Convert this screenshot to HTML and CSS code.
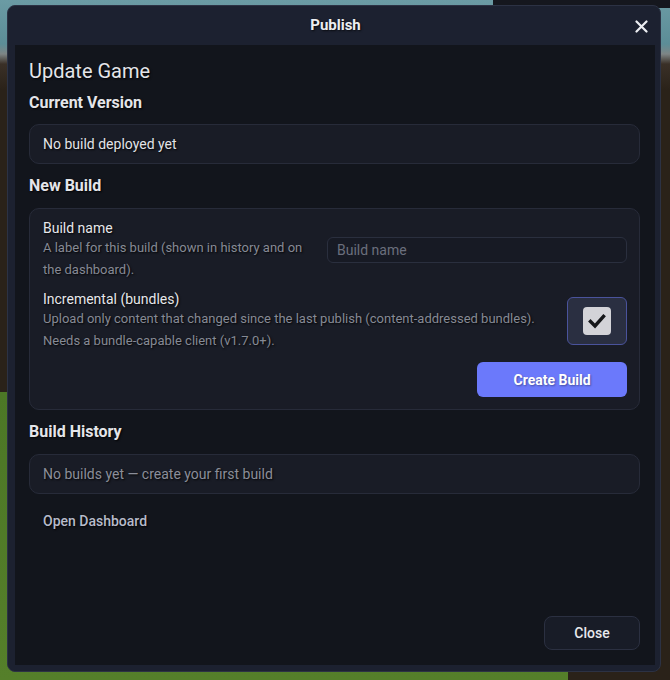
FILE: index.html
```html
<!DOCTYPE html>
<html lang="en">
<head>
<meta charset="utf-8">
<title>Publish</title>
<link rel="stylesheet" href="styles.css">
</head>
<body>
<div class="dialog">
  <div class="dialog-header">
    <span class="dialog-title">Publish</span>
    <button class="icon-close" aria-label="Close">
      <svg width="13" height="13" viewBox="0 0 13 13"><path d="M1.5 1.5 L11.5 11.5 M11.5 1.5 L1.5 11.5" stroke="#eceef2" stroke-width="2.2" stroke-linecap="round"/></svg>
    </button>
  </div>
  <div class="dialog-body">
    <h1 class="page-title">Update Game</h1>
    <h2 class="section-title">Current Version</h2>
    <div class="card card-line">No build deployed yet</div>

    <h2 class="section-title">New Build</h2>
    <div class="card card-form">
      <div class="form-row">
        <div class="field-text">
          <div class="field-label">Build name</div>
          <div class="field-desc">A label for this build (shown in history and on the dashboard).</div>
        </div>
        <input class="text-input" type="text" placeholder="Build name">
      </div>
      <div class="form-row toggle-row">
        <div class="field-text">
          <div class="field-label">Incremental (bundles)</div>
          <div class="field-desc">Upload only content that changed since the last publish (content-addressed bundles). Needs a bundle-capable client (v1.7.0+).</div>
        </div>
        <button class="check-btn" aria-label="Incremental">
          <span class="check-box">
            <svg width="20" height="20" viewBox="0 0 20 20"><path d="M3.5 10.5 L8 15 L16.5 5.5" fill="none" stroke="#15161a" stroke-width="3.4" stroke-linecap="square"/></svg>
          </span>
        </button>
      </div>
      <div class="form-actions">
        <button class="btn-primary">Create Build</button>
      </div>
    </div>

    <h2 class="section-title">Build History</h2>
    <div class="card card-line muted">No builds yet — create your first build</div>

    <div class="link-row"><button class="btn-link">Open Dashboard</button></div>

    <div class="dialog-footer">
      <button class="btn-secondary">Close</button>
    </div>
  </div>
</div>
</body>
</html>
```

FILE: styles.css
```css
html, body {
  margin: 0;
  padding: 0;
  height: 100%;
}
body {
  font-family: Roboto, "Noto Sans", "Liberation Sans", sans-serif;
  background-color: #2a2219;
  background-image:
    linear-gradient(#15171e, #15171e),
    linear-gradient(#4c7726, #557f2a),
    linear-gradient(to bottom, #6b9ba4 0, #5c8d97 44px, #7e8585 54px, #3a3027 64px, #2a2219 90px);
  background-position: 493px 0, 0 392px, 0 0;
  background-size: 177px 8px, 568px 288px, 100% 100%;
  background-repeat: no-repeat;
  overflow: hidden;
}
button, input {
  font-family: inherit;
}
.dialog {
  box-sizing: border-box;
  margin: 5px 9px 0 7px;
  height: 667px;
  background: #1c2130;
  border: 1px solid #2c3244;
  border-radius: 8px;
  padding: 0 5px 6px 7px;
  display: flex;
  flex-direction: column;
}
.dialog-header {
  box-sizing: border-box;
  height: 39px;
  padding-bottom: 2px;
  position: relative;
  display: flex;
  align-items: center;
  justify-content: center;
  flex: none;
}
.dialog-title {
  color: #eceef2;
  font-size: 15px;
  font-weight: 700;
  text-shadow: 1px 1px 2px rgba(0,0,0,.7);
  margin-left: 1px;
}
.icon-close {
  position: absolute;
  right: 5px;
  top: 11px;
  width: 18px;
  height: 18px;
  padding: 0;
  border: 0;
  background: transparent;
  display: flex;
  align-items: center;
  justify-content: center;
}
.dialog-body {
  flex: 1;
  background: #12151c;
  padding: 13px 15px 15px 14px;
  display: flex;
  flex-direction: column;
}
.page-title {
  margin: 0;
  font-size: 20px;
  font-weight: 400;
  line-height: 26px;
  color: #e4e5e9;
  text-shadow: 1px 1px 2px rgba(0,0,0,.9);
}
.section-title {
  margin: 8px 0 10px;
  font-size: 16px;
  font-weight: 700;
  line-height: 22px;
  color: #e4e5e9;
  text-shadow: 1px 1px 2px rgba(0,0,0,.9);
}
.card + .section-title {
  margin-top: 11px;
  margin-bottom: 11px;
}
.card {
  background: #191c26;
  border: 1px solid #272b39;
  border-radius: 10px;
}
.card-line {
  box-sizing: border-box;
  height: 40px;
  padding: 0 13px;
  display: flex;
  align-items: center;
  font-size: 14px;
  color: #e2e3e7;
  text-shadow: 1px 1px 2px rgba(0,0,0,.9);
}
.card-line.muted {
  color: #8b8e99;
}
.card-form {
  padding: 10px 12px 12px 13px;
  display: flex;
  flex-direction: column;
}
.form-row {
  display: grid;
  grid-template-columns: 1fr 300px;
  column-gap: 12px;
  align-items: center;
}
.toggle-row {
  grid-template-columns: 1fr 60px;
  margin-top: 9px;
}
.field-label {
  font-size: 14px;
  line-height: 18px;
  color: #e6e7eb;
  text-shadow: 1px 1px 2px rgba(0,0,0,.9);
}
.field-desc {
  font-size: 13px;
  line-height: 22px;
  color: #868a95;
  text-shadow: 1px 1px 2px rgba(0,0,0,.9);
}
.text-input {
  box-sizing: border-box;
  width: 300px;
  height: 26px;
  background: #171a24;
  border: 1px solid #2a2f3e;
  border-radius: 6px;
  padding: 0 9px;
  font-size: 14px;
  color: #e2e3e7;
  outline: none;
}
.text-input::placeholder {
  color: #6b6f7d;
}
.check-btn {
  box-sizing: border-box;
  width: 60px;
  height: 48px;
  padding: 0;
  background: #2a2f41;
  border: 1px solid #4a539c;
  border-radius: 6px;
  display: flex;
  align-items: center;
  justify-content: center;
}
.check-box {
  width: 28px;
  height: 28px;
  border-radius: 4px;
  background: #d3d3d8;
  display: flex;
  align-items: center;
  justify-content: center;
}
.form-actions {
  display: flex;
  justify-content: flex-end;
  margin-top: 10px;
}
.btn-primary {
  width: 150px;
  height: 35px;
  border: 0;
  border-radius: 6px;
  background: #6b79fb;
  color: #ffffff;
  font-size: 14px;
  font-weight: 700;
  text-shadow: 1px 1px 2px rgba(0,0,0,.35);
}
.link-row {
  margin-top: 10px;
}
.btn-link {
  height: 34px;
  padding: 0 14px;
  border: 0;
  background: transparent;
  color: #b7bbca;
  font-size: 14px;
  font-weight: 500;
  text-shadow: 1px 1px 2px rgba(0,0,0,.9);
}
.dialog-footer {
  margin-top: auto;
  display: flex;
  justify-content: flex-end;
}
.btn-secondary {
  box-sizing: border-box;
  width: 96px;
  height: 34px;
  background: #181c27;
  border: 1px solid #2b3041;
  border-radius: 8px;
  color: #e8e9ed;
  font-size: 14px;
  font-weight: 500;
}
```
